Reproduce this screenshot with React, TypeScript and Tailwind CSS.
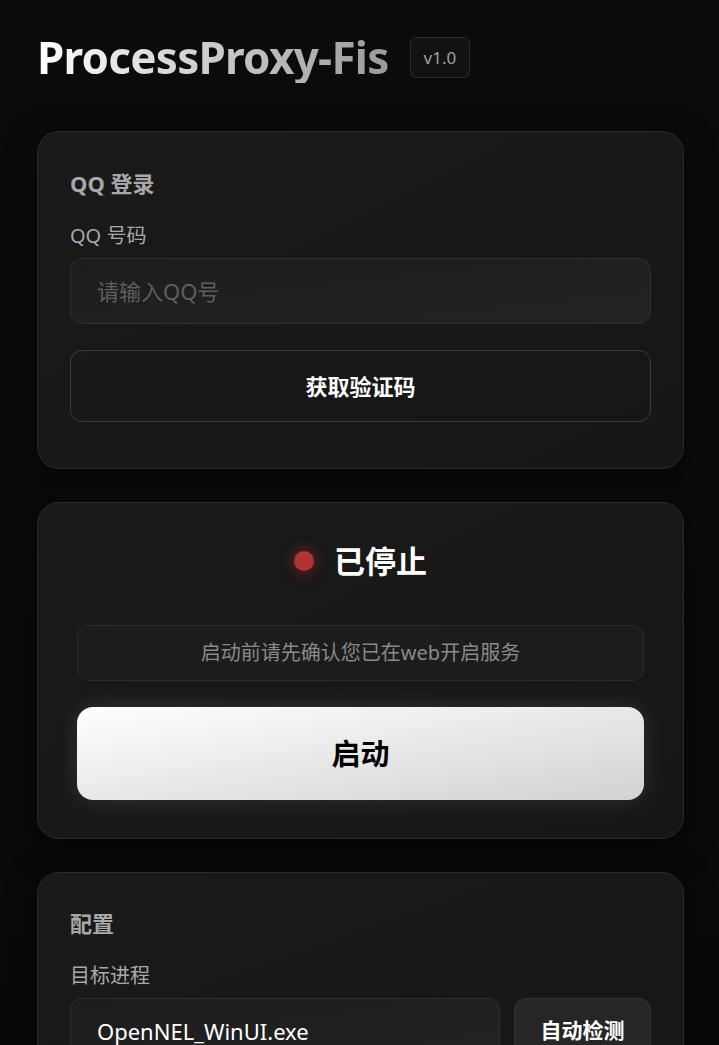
const FONT = "font-['Noto_Sans','Noto_Sans_CJK_SC',sans-serif]";

function Card({ children, className = "" }: { children: React.ReactNode; className?: string }) {
  return (
    <section
      className={`rounded-[22px] border border-[#2a2a2a] bg-gradient-to-br from-[#1a1a1a] to-[#161616] shadow-[0_8px_30px_rgba(0,0,0,0.5)] ${className}`}
    >
      {children}
    </section>
  );
}

export default function App() {
  return (
    <main className={`min-h-screen overflow-hidden bg-gradient-to-b from-[#0b0b0b] to-[#080808] ${FONT} text-white`}>
      <div className="pl-[37px] pr-[35px] pt-[31px] pb-10">
        <header className="flex items-center gap-[21px]">
          <h1 className="bg-gradient-to-r from-white to-[#9a9a9a] bg-clip-text text-[44px] leading-[52px] font-bold tracking-[-0.75px] text-transparent">
            ProcessProxy-Fis
          </h1>
          <span className="rounded-md border border-[#2c2c2c] bg-[#121212] px-[13px] py-[8px] text-[17px] leading-[23px] text-[#a0a0a0]">
            v1.0
          </span>
        </header>

        <Card className="mt-[48px] px-[32px] pt-[36px] pb-[46px]">
          <h2 className="text-[22px] leading-[30px] font-bold text-[#a8a8a8]">QQ 登录</h2>
          <label className="mt-[25px] block text-[20px] leading-[26px] text-[#a8a8a8]">QQ 号码</label>
          <input
            placeholder="请输入QQ号"
            className="mt-[9px] block h-[66px] w-full rounded-xl border border-[#2e2e2e] bg-gradient-to-br from-[#1d1d1d] to-[#232323] px-[26px] text-[22px] text-white outline-none placeholder:text-[#5e5e5e]"
          />
          <button className="mt-[26px] flex h-[72px] w-full items-center justify-center rounded-xl border border-[#3a3a3a] bg-transparent text-[22px] font-bold text-white">
            获取验证码
          </button>
        </Card>

        <Card className="mt-[33px] px-[39px] pt-[38px] pb-[38px]">
          <div className="flex items-center justify-center gap-[20px]">
            <span className="h-[20px] w-[20px] rounded-full bg-[#b03434] shadow-[0_0_12px_4px_rgba(176,40,40,0.35)]" />
            <span className="text-[31px] leading-[40px] font-bold text-white">已停止</span>
          </div>
          <div className="mt-[44px] flex h-[56px] items-center justify-center rounded-xl border border-[#2c2c2c] bg-[#1c1c1c] text-[20px] text-[#8a8a8a]">
            启动前请先确认您已在web开启服务
          </div>
          <button className="mt-[26px] flex h-[93px] w-full items-center justify-center rounded-[16px] bg-gradient-to-br from-white to-[#d2d2d2] text-[29px] font-bold text-black shadow-[0_0_24px_rgba(255,255,255,0.12)]">
            启动
          </button>
        </Card>

        <Card className="mt-[33px] px-[32px] pt-[35px] pb-[40px]">
          <h2 className="text-[22px] leading-[30px] font-bold text-[#a8a8a8]">配置</h2>
          <label className="mt-[25px] block text-[20px] leading-[26px] text-[#a8a8a8]">目标进程</label>
          <div className="mt-[9px] flex gap-[14px]">
            <input
              defaultValue="OpenNEL_WinUI.exe"
              className="block h-[66px] min-w-0 flex-1 rounded-xl border border-[#2e2e2e] bg-gradient-to-br from-[#1d1d1d] to-[#232323] px-[26px] text-[22px] text-white outline-none"
            />
            <button className="h-[66px] w-[137px] rounded-xl border border-[#333] bg-[#262626] text-[21px] font-bold text-white">
              自动检测
            </button>
          </div>
        </Card>
      </div>
    </main>
  );
}
